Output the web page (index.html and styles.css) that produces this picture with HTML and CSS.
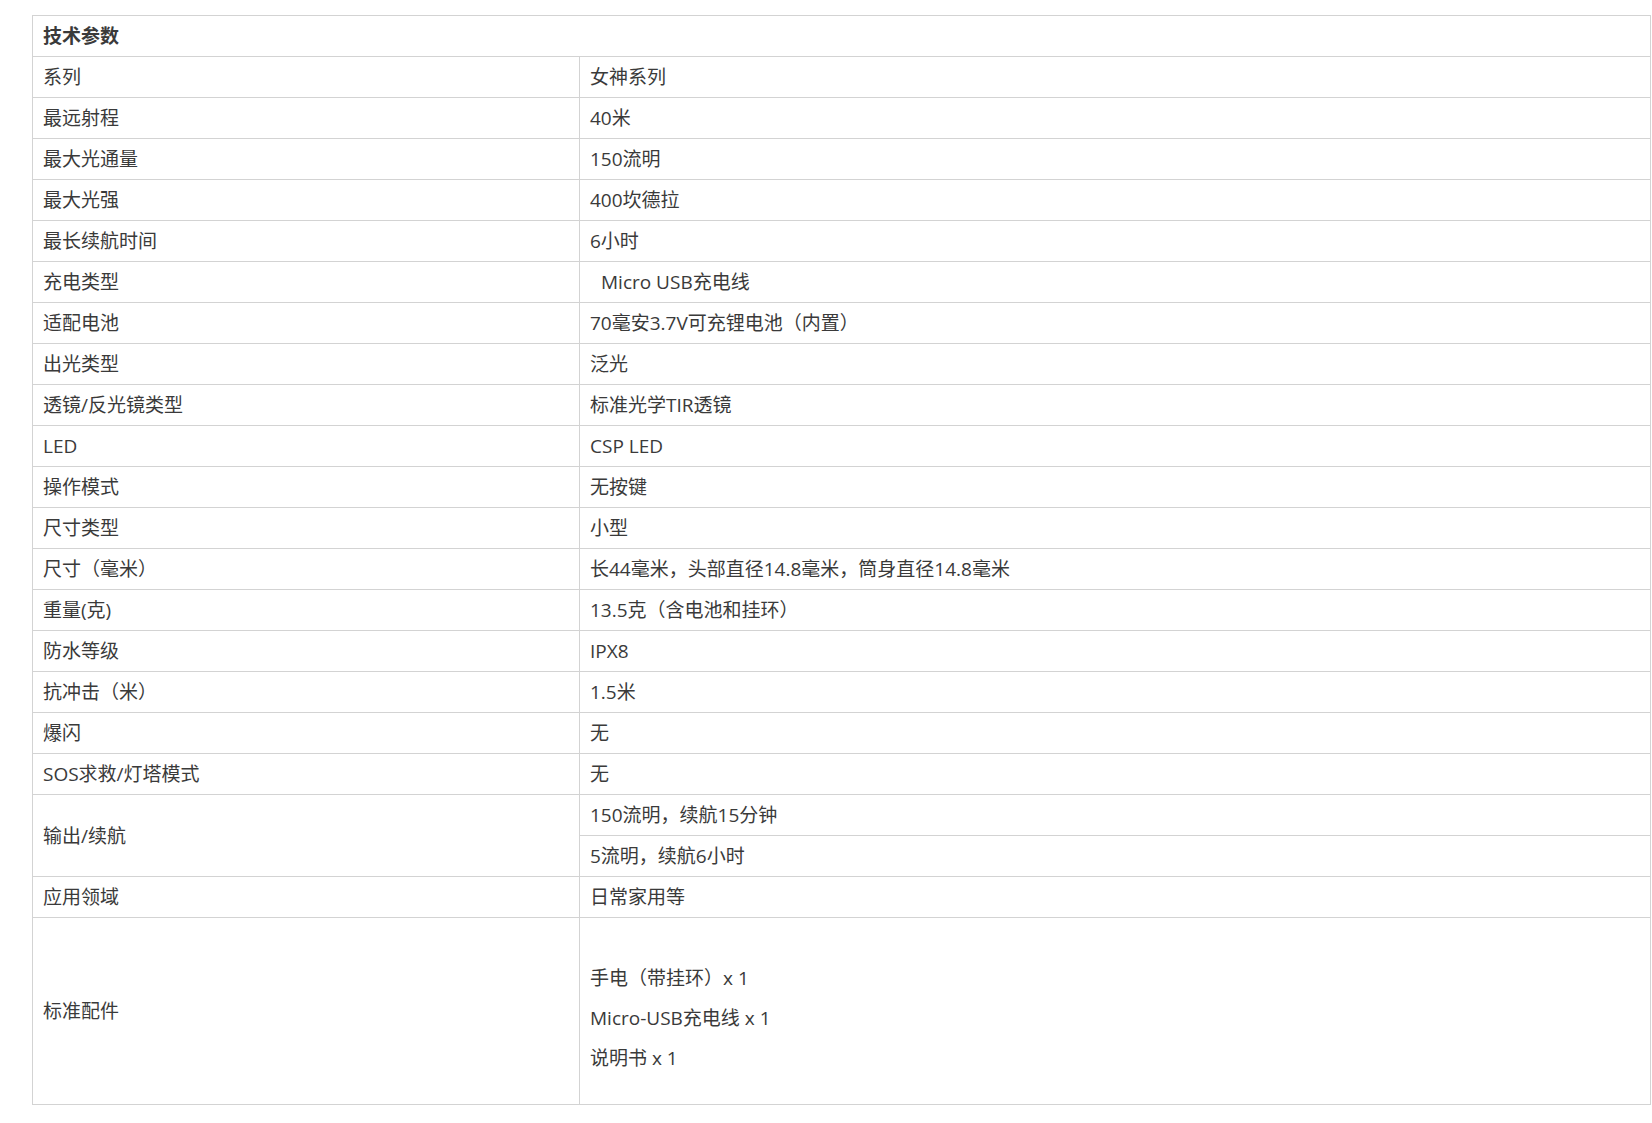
FILE: index.html
```html
<!DOCTYPE html>
<html lang="zh-CN">
<head>
<meta charset="utf-8">
<title>技术参数</title>
<link rel="stylesheet" href="styles.css">
</head>
<body>
<div class="wrap">
<table class="spec">
  <colgroup><col class="c1"><col class="c2"></colgroup>
  <tr><th colspan="2">技术参数</th></tr>
  <tr><td>系列</td><td>女神系列</td></tr>
  <tr><td>最远射程</td><td>40米</td></tr>
  <tr><td>最大光通量</td><td>150流明</td></tr>
  <tr><td>最大光强</td><td>400坎德拉</td></tr>
  <tr><td>最长续航时间</td><td>6小时</td></tr>
  <tr><td>充电类型</td><td><span class="indent">Micro USB充电线</span></td></tr>
  <tr><td>适配电池</td><td>70毫安3.7V可充锂电池（内置）</td></tr>
  <tr><td>出光类型</td><td>泛光</td></tr>
  <tr><td>透镜/反光镜类型</td><td>标准光学TIR透镜</td></tr>
  <tr><td>LED</td><td>CSP LED</td></tr>
  <tr><td>操作模式</td><td>无按键</td></tr>
  <tr><td>尺寸类型</td><td>小型</td></tr>
  <tr><td>尺寸（毫米）</td><td>长44毫米，头部直径14.8毫米，筒身直径14.8毫米</td></tr>
  <tr><td>重量(克)</td><td>13.5克（含电池和挂环）</td></tr>
  <tr><td>防水等级</td><td>IPX8</td></tr>
  <tr><td>抗冲击（米）</td><td>1.5米</td></tr>
  <tr><td>爆闪</td><td>无</td></tr>
  <tr><td>SOS求救/灯塔模式</td><td>无</td></tr>
  <tr><td rowspan="2">输出/续航</td><td>150流明，续航15分钟</td></tr>
  <tr><td>5流明，续航6小时</td></tr>
  <tr><td>应用领域</td><td>日常家用等</td></tr>
  <tr class="tall"><td>标准配件</td><td class="list"><p class="line"></p><p class="line">手电（带挂环）x 1</p><p class="line">Micro-USB充电线 x 1</p><p class="line">说明书 x 1</p></td></tr>
</table>
</div>
</body>
</html>
```

FILE: styles.css
```css
html, body {
  margin: 0;
  padding: 0;
  background: #ffffff;
}
.wrap {
  padding: 15px 0 0 32px;
}
.spec {
  border-collapse: collapse;
  width: 1619px;
  font-family: "Open Sans", "Noto Sans CJK SC", sans-serif;
  font-size: 19px;
  color: #3a3a3a;
}
.c1 { width: 547px; }
.spec th, .spec td {
  border: 1px solid #d3d3d3;
  height: 40px;
  padding: 0 10px;
  text-align: left;
  vertical-align: middle;
  line-height: 24px;
  white-space: nowrap;
}
.spec th {
  font-weight: bold;
}
.indent {
  padding-left: 11px;
}
.tall td {
  height: 186px;
}
.spec td.list {
  vertical-align: top;
  padding-top: 0;
}
.line {
  margin: 0;
  height: 40px;
  line-height: 40px;
}
```
